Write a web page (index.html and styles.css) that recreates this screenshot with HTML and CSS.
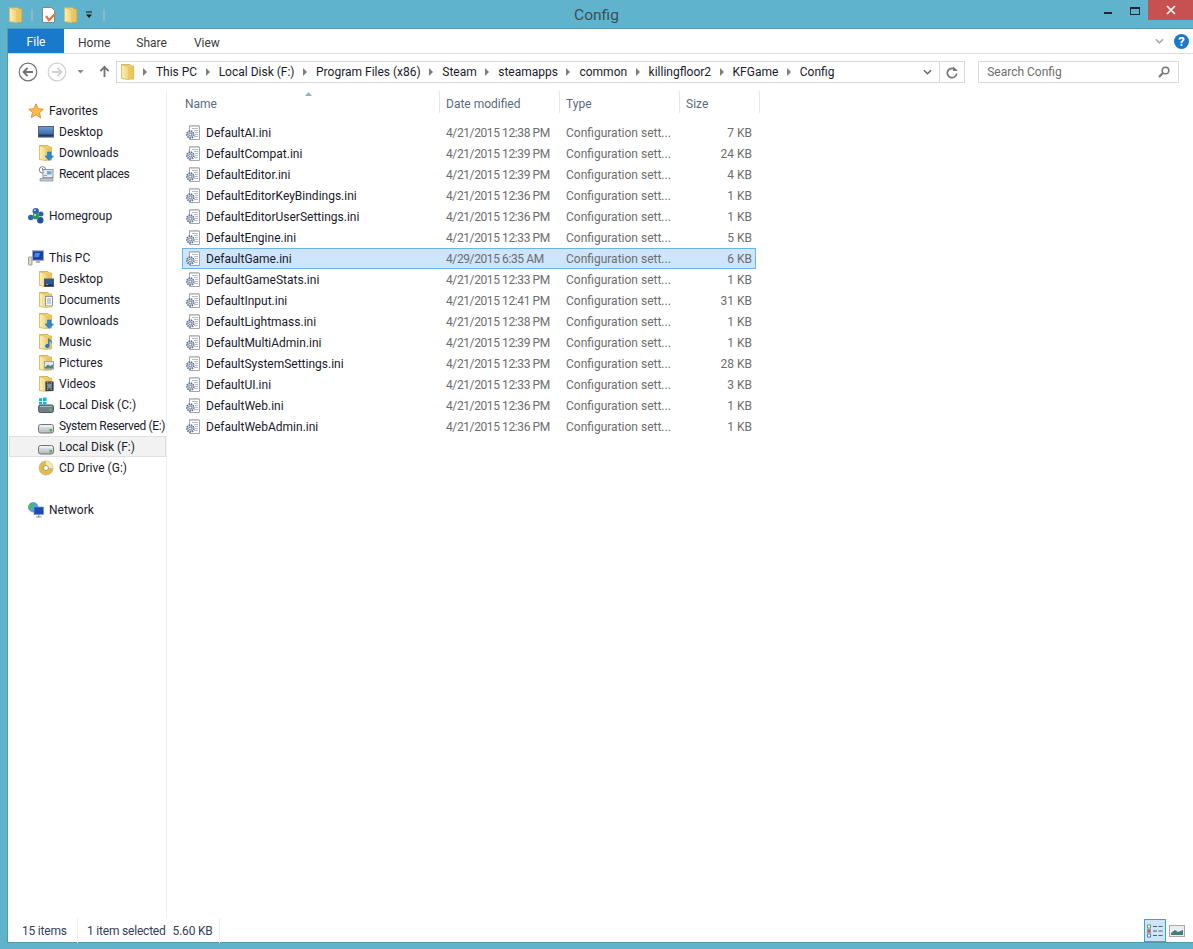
FILE: index.html
```html
<!DOCTYPE html>
<html lang="en">
<head>
    <meta charset="UTF-8">
    <title>Config</title>
    <link rel="stylesheet" href="styles.css">
</head>
<body>
    <!-- icon set -->
    <svg class="defs" width="0" height="0">
        <defs>
            <linearGradient id="folderFill" x1="0" y1="0" x2="1" y2="0">
                <stop offset="0" stop-color="#fbf0b4"/>
                <stop offset="1" stop-color="#efd27a"/>
            </linearGradient>
            <linearGradient id="driveFill" x1="0" y1="0" x2="0" y2="1">
                <stop offset="0" stop-color="#eceef0"/>
                <stop offset="1" stop-color="#b4b9bd"/>
            </linearGradient>
            <linearGradient id="screenFill" x1="0" y1="0" x2="0" y2="1">
                <stop offset="0" stop-color="#6f9fd8"/>
                <stop offset="1" stop-color="#2c5a9e"/>
            </linearGradient>
            <symbol id="folder" viewBox="0 0 16 16">
                <path d="M1.500 .5h8.500l.6 1.500h3v13H9L1.500 14.500z" fill="#f3d272" stroke="#c9a94f" stroke-width=".8"/>
                <path d="M1.500 .8 9 3v12.700L1.500 14.400z" fill="url(#folderFill)" stroke="#d6b862" stroke-width=".7"/>
                <path d="M9.800 3h3.400v11.600H9.800z" fill="#f2c64e"/>
            </symbol>
            <symbol id="gearfile" viewBox="0 0 16 16">
                <path d="M4.500 1h10v13.500h-10z" fill="#fff" stroke="#a3a6ab"/>
                <path d="M4.500 .7h10" stroke="#8f949a" stroke-dasharray="1 1"/>
                <path d="M7 3.500h6M9 5.500h4M10 7.500h3M10 9.500h3M9 11.500h4" stroke="#b4b9c2"/>
                <circle cx="5.300" cy="9.500" r="3.400" fill="#dfe6f0" stroke="#5f7190" stroke-width="1.800" stroke-dasharray="1.500 .8"/>
                <circle cx="5.300" cy="9.500" r="1.500" fill="#f4f7fb" stroke="#4f5f7a" stroke-width=".8"/>
            </symbol>
            <symbol id="star" viewBox="0 0 16 16">
                <path d="M8 .8l2.200 4.900 5.200.5-3.900 3.500 1.200 5.300L8 11.800l-4.700 2.700 1.200-5.300L.6 6.200l5.200-.5z" fill="#fbbb4a" stroke="#e78b2b" stroke-width=".9"/>
            </symbol>
            <symbol id="monitor" viewBox="0 0 16 16">
                <rect x=".5" y="2.500" width="15" height="10.500" fill="url(#screenFill)" stroke="#55606f"/>
                <path d="M1 10.500h14v2H1z" fill="#1d3a6a"/>
                <path d="M1 13.500h14" stroke="#9aa3ae"/>
            </symbol>
            <symbol id="arrowdown" viewBox="0 0 16 16">
                <path d="M9.500 7h3.500v4h2.500l-4.300 4.500L7 11h2.500z" fill="#2a8ad8" stroke="#1b6cb4" stroke-width=".6"/>
            </symbol>
            <symbol id="recent" viewBox="0 0 16 16">
                <circle cx="4.500" cy="3.800" r="3.200" fill="#fff" stroke="#7a8088"/>
                <path d="M4.500 2v2h1.500" fill="none" stroke="#5a6068" stroke-width=".8"/>
                <rect x="5" y="3.500" width="10" height="8" fill="#e6eaef" stroke="#8a9098"/>
                <rect x="9" y="5" width="4.500" height="3.500" fill="#6fa9dc"/>
                <path d="M6 9.500h3M6 11.500h8" stroke="#9aa1aa"/>
                <path d="M2 12.500h13v2.500H2z" fill="#c3c7cc" stroke="#83888f" stroke-width=".7"/>
            </symbol>
            <symbol id="homegroup" viewBox="0 0 16 16">
                <circle cx="2.800" cy="9.500" r="2.800" fill="#2f62b8"/>
                <circle cx="7.800" cy="3.300" r="3.200" fill="#2f62b8"/>
                <circle cx="13" cy="6" r="2.500" fill="#2f5fb0"/>
                <circle cx="12.300" cy="12.300" r="3.200" fill="#24509f"/>
                <circle cx="8" cy="8.200" r="3.300" fill="#2f9b50"/>
                <circle cx="7" cy="7" r="1.100" fill="#bfe8bb"/>
                <circle cx="7" cy="2.200" r=".9" fill="#c5dbf5"/>
            </symbol>
            <symbol id="pc" viewBox="0 0 16 16">
                <rect x=".5" y="7" width="3.500" height="8" rx=".5" fill="#d7dbc8" stroke="#8a8f86" stroke-width=".8"/>
                <rect x="4.500" y=".8" width="11" height="9.500" fill="#1d3fae" stroke="#a0a6b0"/>
                <path d="M7 3h5l-1 4H6z" fill="#3f8be8"/>
                <path d="M8.500 10.500h3l.8 2.500H7.700z" fill="#aab0b8"/>
            </symbol>
            <symbol id="lib-desktop" viewBox="0 0 10 10">
                <rect x=".5" y="2" width="9" height="7.500" fill="#2a5a9c" stroke="#4e5a6a"/>
                <path d="M1 7.500h8V9H1z" fill="#1c2d4a"/>
                <path d="M2 7.500h2" stroke="#e8903a"/>
            </symbol>
            <symbol id="lib-doc" viewBox="0 0 10 10">
                <rect x="1.500" y=".5" width="7" height="9.500" fill="#f4f6f9" stroke="#8f96a0"/>
                <path d="M3 3h4M3 5h4M3 7h4" stroke="#8fa7c4"/>
            </symbol>
            <symbol id="lib-music" viewBox="0 0 10 10">
                <path d="M4.500 0v7.200a2.200 2 0 1 1-1.400-1.600V0z" fill="#1e78cc"/>
                <path d="M4.500 0c1 2 3 2 2.500 5-.5-1.500-1.500-2-2.500-2z" fill="#1e78cc"/>
            </symbol>
            <symbol id="lib-pic" viewBox="0 0 10 10">
                <rect x=".5" y="1.500" width="9" height="7.500" fill="#dfe9ee" stroke="#9aa2a8"/>
                <path d="M1 7l3-2.500 2 1.500 3-1.500V8.500H1z" fill="#4f8a80"/>
            </symbol>
            <symbol id="lib-video" viewBox="0 0 10 10">
                <rect x="1" y=".5" width="8" height="9.500" fill="#48505a" stroke="#2c323a"/>
                <path d="M3 .5v9.500M7 .5v9.500" stroke="#c5cbd2" stroke-dasharray="1 1"/>
                <rect x="3.500" y="2.500" width="3" height="5" fill="#7d97b2"/>
            </symbol>
            <symbol id="drive" viewBox="0 0 16 16">
                <rect x=".5" y="6.500" width="15" height="8.500" rx="2.200" fill="url(#driveFill)" stroke="#6f757a"/>
                <path d="M2 8h12" stroke="#f8f9fa"/>
                <rect x="11.500" y="11" width="2.500" height="2.400" fill="#4fae48"/>
            </symbol>
            <symbol id="sysdrive" viewBox="0 0 16 16">
                <rect x=".5" y="8" width="15" height="7.500" rx="1.800" fill="#6d808c" stroke="#4e5a62"/>
                <path d="M2 9.500h12" stroke="#aab6bd"/>
                <rect x="11.500" y="11.500" width="2.500" height="2.400" fill="#5fbb48"/>
                <path d="M1 1.500l3-.5v3H1zM5 .8l3.500-.6V4H5zM1 4.800h3v2.700H1zM5 4.800h3.500v2.700H5z" fill="#12b0e8"/>
            </symbol>
            <symbol id="cd" viewBox="0 0 16 16">
                <circle cx="8" cy="8" r="7" fill="#e6bd3a" stroke="#b4b4a8" stroke-width=".8"/>
                <path d="M8 1a7 7 0 0 1 7 7H8z" fill="#f5e9b5"/>
                <circle cx="8" cy="8" r="2.600" fill="#e9ecef" stroke="#8f9398" stroke-width=".7"/>
                <circle cx="8" cy="8" r=".9" fill="#fff"/>
            </symbol>
            <symbol id="network" viewBox="0 0 16 16">
                <circle cx="5.200" cy="5.200" r="4.800" fill="#4aa6e0" stroke="#2f7fb8" stroke-width=".5"/>
                <path d="M2 2.500c2-1 3.500 0 3.500 1.500S3 5.500 2.800 7.500C1 6.500.3 4 2 2.500z" fill="#4fbb4f"/>
                <rect x="6" y="5" width="9.500" height="7.500" fill="#1d4cb5" stroke="#7a93bb" stroke-width=".7"/>
                <path d="M10.700 12.500v2M8 15h5.500" stroke="#7f8fa5" stroke-width="1.200"/>
            </symbol>
        </defs>
    </svg>

    <header class="titlebar">
        <div class="quick">
            <svg class="ico"><use href="#folder"/></svg>
            <span class="quick-sep"></span>
            <svg class="ico" viewBox="0 0 16 16">
                <path d="M1.500 .5h9l3 3v12h-12z" fill="#fff" stroke="#7f858c"/>
                <path d="M5 9l3 4 6-6" fill="none" stroke="#e8703a" stroke-width="2.200"/>
            </svg>
            <svg class="ico"><use href="#folder"/></svg>
            <svg class="quick-more" viewBox="0 0 8 8">
                <path d="M1 1h6" stroke="#111" stroke-width="1"/>
                <path d="M1 3.500h6L4 7z" fill="#111"/>
            </svg>
            <span class="quick-sep"></span>
        </div>
        <div class="title">Config</div>
        <div class="winctl">
            <span class="btn-min"></span>
            <span class="btn-max"></span>
            <span class="btn-close">
                <svg width="10" height="10" viewBox="0 0 10 10"><path d="M1 1l8 8M9 1l-8 8" stroke="#fff" stroke-width="1.700"/></svg>
            </span>
        </div>
    </header>

    <main class="window">
        <div class="ribbon">
            <div class="tab tab-file">File</div>
            <div class="tab tab-home">Home</div>
            <div class="tab tab-share">Share</div>
            <div class="tab tab-view">View</div>
            <div class="ribbon-right">
                <svg class="chev" viewBox="0 0 10 6"><path d="M1 1l4 4 4-4" fill="none" stroke="#a6a6a6" stroke-width="1.700"/></svg>
                <span class="help">?</span>
            </div>
        </div>

        <div class="navbar">
            <div class="navbtns">
                <svg class="round" viewBox="0 0 20 20">
                    <circle cx="10" cy="10" r="8.800" fill="#fff" stroke="#737373" stroke-width="1.200"/>
                    <path d="M15 10H6M9.500 6L5.500 10l4 4" fill="none" stroke="#737373" stroke-width="1.800"/>
                </svg>
                <svg class="round" viewBox="0 0 20 20">
                    <circle cx="10" cy="10" r="8.800" fill="#fff" stroke="#d0d0d0" stroke-width="1.200"/>
                    <path d="M5 10h9M10.500 6l4 4-4 4" fill="none" stroke="#d0d0d0" stroke-width="1.800"/>
                </svg>
                <svg class="recent-drop" viewBox="0 0 8 5"><path d="M0 0h8L4 4.500z" fill="#8a8a8a"/></svg>
                <svg class="uparrow" viewBox="0 0 12 14"><path d="M6 13V2M1.500 6.500L6 2l4.500 4.500" fill="none" stroke="#737373" stroke-width="2"/></svg>
            </div>
            <div class="address">
                <svg class="ico"><use href="#folder"/></svg>
                <span class="crumb">This PC</span>
                <span class="crumb">Local Disk (F:)</span>
                <span class="crumb">Program Files (x86)</span>
                <span class="crumb">Steam</span>
                <span class="crumb">steamapps</span>
                <span class="crumb">common</span>
                <span class="crumb">killingfloor2</span>
                <span class="crumb">KFGame</span>
                <span class="crumb">Config</span>
                <svg class="addr-drop" viewBox="0 0 10 6"><path d="M1 1l4 4 4-4" fill="none" stroke="#666" stroke-width="1.600"/></svg>
                <span class="addr-refresh">
                    <svg width="12" height="13" viewBox="0 0 12 13"><path d="M9.800 4.200A4.700 4.700 0 1 0 10.700 7.500" fill="none" stroke="#777" stroke-width="1.700"/><path d="M7 .2v4.800h4.800z" fill="#777"/></svg>
                </span>
            </div>
            <div class="search">
                <span>Search Config</span>
                <svg width="12" height="12" viewBox="0 0 12 12"><circle cx="7.500" cy="4.500" r="3.300" fill="none" stroke="#777" stroke-width="1.500"/><path d="M5 7L1 11" stroke="#777" stroke-width="2.200"/></svg>
            </div>
        </div>

        <div class="body">
            <nav class="tree">
                <div class="tree-group">
                    <div class="tree-row top"><svg class="ico"><use href="#star"/></svg>Favorites</div>
                    <div class="tree-row"><svg class="ico"><use href="#monitor"/></svg>Desktop</div>
                    <div class="tree-row"><svg class="ico"><use href="#folder"/><use href="#arrowdown"/></svg>Downloads</div>
                    <div class="tree-row tight"><svg class="ico"><use href="#recent"/></svg>Recent places</div>
                </div>
                <div class="tree-group">
                    <div class="tree-row top"><svg class="ico"><use href="#homegroup"/></svg>Homegroup</div>
                </div>
                <div class="tree-group">
                    <div class="tree-row top"><svg class="ico"><use href="#pc"/></svg>This PC</div>
                    <div class="tree-row"><svg class="ico"><use href="#folder"/><use href="#lib-desktop" x="6" y="6" width="10" height="10"/></svg>Desktop</div>
                    <div class="tree-row"><svg class="ico"><use href="#folder"/><use href="#lib-doc" x="6" y="4" width="10" height="10"/></svg>Documents</div>
                    <div class="tree-row"><svg class="ico"><use href="#folder"/><use href="#arrowdown"/></svg>Downloads</div>
                    <div class="tree-row"><svg class="ico"><use href="#folder"/><use href="#lib-music" x="7" y="4" width="10" height="11"/></svg>Music</div>
                    <div class="tree-row"><svg class="ico"><use href="#folder"/><use href="#lib-pic" x="6" y="5" width="10" height="10"/></svg>Pictures</div>
                    <div class="tree-row"><svg class="ico"><use href="#folder"/><use href="#lib-video" x="7" y="5" width="9" height="10"/></svg>Videos</div>
                    <div class="tree-row"><svg class="ico"><use href="#sysdrive"/></svg>Local Disk (C:)</div>
                    <div class="tree-row tight"><svg class="ico"><use href="#drive"/></svg>System Reserved (E:)</div>
                    <div class="tree-row current"><svg class="ico"><use href="#drive"/></svg>Local Disk (F:)</div>
                    <div class="tree-row"><svg class="ico"><use href="#cd"/></svg>CD Drive (G:)</div>
                </div>
                <div class="tree-group">
                    <div class="tree-row top"><svg class="ico"><use href="#network"/></svg>Network</div>
                </div>
            </nav>

            <section class="files">
                <div class="cols">
                    <div class="col col-name">Name<svg class="sort" viewBox="0 0 7 4"><path d="M0 4L3.500 0 7 4z" fill="#8fb4c8"/></svg></div>
                    <div class="col col-date">Date modified</div>
                    <div class="col col-type">Type</div>
                    <div class="col col-size">Size</div>
                </div>
                <div class="rows">
                    <div class="row"><span class="c-name"><svg class="ico"><use href="#gearfile"/></svg>DefaultAI.ini</span><span class="c-date">4/21/2015 12:38 PM</span><span class="c-type">Configuration sett...</span><span class="c-size">7 KB</span></div>
                    <div class="row"><span class="c-name"><svg class="ico"><use href="#gearfile"/></svg>DefaultCompat.ini</span><span class="c-date">4/21/2015 12:39 PM</span><span class="c-type">Configuration sett...</span><span class="c-size">24 KB</span></div>
                    <div class="row"><span class="c-name"><svg class="ico"><use href="#gearfile"/></svg>DefaultEditor.ini</span><span class="c-date">4/21/2015 12:39 PM</span><span class="c-type">Configuration sett...</span><span class="c-size">4 KB</span></div>
                    <div class="row"><span class="c-name"><svg class="ico"><use href="#gearfile"/></svg>DefaultEditorKeyBindings.ini</span><span class="c-date">4/21/2015 12:36 PM</span><span class="c-type">Configuration sett...</span><span class="c-size">1 KB</span></div>
                    <div class="row"><span class="c-name"><svg class="ico"><use href="#gearfile"/></svg>DefaultEditorUserSettings.ini</span><span class="c-date">4/21/2015 12:36 PM</span><span class="c-type">Configuration sett...</span><span class="c-size">1 KB</span></div>
                    <div class="row"><span class="c-name"><svg class="ico"><use href="#gearfile"/></svg>DefaultEngine.ini</span><span class="c-date">4/21/2015 12:33 PM</span><span class="c-type">Configuration sett...</span><span class="c-size">5 KB</span></div>
                    <div class="row selected"><span class="c-name"><svg class="ico"><use href="#gearfile"/></svg>DefaultGame.ini</span><span class="c-date">4/29/2015 6:35 AM</span><span class="c-type">Configuration sett...</span><span class="c-size">6 KB</span></div>
                    <div class="row"><span class="c-name"><svg class="ico"><use href="#gearfile"/></svg>DefaultGameStats.ini</span><span class="c-date">4/21/2015 12:33 PM</span><span class="c-type">Configuration sett...</span><span class="c-size">1 KB</span></div>
                    <div class="row"><span class="c-name"><svg class="ico"><use href="#gearfile"/></svg>DefaultInput.ini</span><span class="c-date">4/21/2015 12:41 PM</span><span class="c-type">Configuration sett...</span><span class="c-size">31 KB</span></div>
                    <div class="row"><span class="c-name"><svg class="ico"><use href="#gearfile"/></svg>DefaultLightmass.ini</span><span class="c-date">4/21/2015 12:38 PM</span><span class="c-type">Configuration sett...</span><span class="c-size">1 KB</span></div>
                    <div class="row"><span class="c-name"><svg class="ico"><use href="#gearfile"/></svg>DefaultMultiAdmin.ini</span><span class="c-date">4/21/2015 12:39 PM</span><span class="c-type">Configuration sett...</span><span class="c-size">1 KB</span></div>
                    <div class="row"><span class="c-name"><svg class="ico"><use href="#gearfile"/></svg>DefaultSystemSettings.ini</span><span class="c-date">4/21/2015 12:33 PM</span><span class="c-type">Configuration sett...</span><span class="c-size">28 KB</span></div>
                    <div class="row"><span class="c-name"><svg class="ico"><use href="#gearfile"/></svg>DefaultUI.ini</span><span class="c-date">4/21/2015 12:33 PM</span><span class="c-type">Configuration sett...</span><span class="c-size">3 KB</span></div>
                    <div class="row"><span class="c-name"><svg class="ico"><use href="#gearfile"/></svg>DefaultWeb.ini</span><span class="c-date">4/21/2015 12:36 PM</span><span class="c-type">Configuration sett...</span><span class="c-size">1 KB</span></div>
                    <div class="row"><span class="c-name"><svg class="ico"><use href="#gearfile"/></svg>DefaultWebAdmin.ini</span><span class="c-date">4/21/2015 12:36 PM</span><span class="c-type">Configuration sett...</span><span class="c-size">1 KB</span></div>
                </div>
            </section>
        </div>

        <footer class="status">
            <span class="st-count">15 items</span>
            <span class="st-sel">1 item selected</span>
            <span class="st-size">5.60 KB</span>
            <div class="views">
                <span class="view-btn on">
                    <svg width="18" height="14" viewBox="0 0 18 14">
                        <rect x="1.500" y="1" width="3" height="3" fill="#fff" stroke="#6f9a5a"/>
                        <rect x="1.500" y="5.500" width="3" height="3" fill="#d9534f" stroke="#999"/>
                        <rect x="1.500" y="10" width="3" height="3" fill="#fff" stroke="#5a7ab0"/>
                        <path d="M7 2.500h4M12.500 2.500h4M7 7h4M12.500 7h4M7 11.500h4M12.500 11.500h4" stroke="#55606e"/>
                    </svg>
                </span>
                <span class="view-btn">
                    <svg width="16" height="14" viewBox="0 0 16 14">
                        <rect x=".5" y="1.500" width="15" height="11" fill="#e8eef2" stroke="#a4a8ac"/>
                        <path d="M2 9l4-3 3 2 5-2v5H2z" fill="#3f7f76"/>
                    </svg>
                </span>
            </div>
        </footer>
    </main>
</body>
</html>
```

FILE: styles.css
```css
* {
    box-sizing: border-box;
}
html, body {
    height: 100%;
}
body {
    margin: 0;
    background-color: #5fb3cd;
    font-family: Roboto, "Noto Sans", sans-serif;
    font-size: 12px;
    color: #1a1a2a;
    display: flex;
    flex-direction: column;
    padding-bottom: 6px;
    overflow: hidden;
}
.defs {
    display: block;
    height: 0;
}
.ico {
    width: 16px;
    height: 16px;
    flex: none;
}

/* title bar */
.titlebar {
    height: 28px;
    flex: none;
    display: grid;
    grid-template-columns: 1fr auto 1fr;
    align-items: start;
}
.quick {
    display: flex;
    align-items: center;
    height: 29px;
    padding-left: 8px;
}
.quick-sep {
    width: 2px;
    height: 12px;
    margin: 0 8px 0 7px;
    background-color: #8fb9c6;
}
.quick .ico + .ico {
    margin-left: 6px;
}
.quick-more {
    width: 8px;
    height: 8px;
    margin: 0 3px 0 6px;
}
.title {
    font-size: 15.5px;
    line-height: 30px;
    color: #3c4f58;
}
.winctl {
    display: flex;
    align-items: flex-start;
    justify-self: end;
}
.btn-min {
    width: 8px;
    height: 2px;
    margin: 12px 18px 0 0;
    background-color: #1c2a30;
}
.btn-max {
    width: 10px;
    height: 8px;
    margin: 7px 8px 0 0;
    border: 1px solid #1c2a30;
    border-top-width: 2px;
}
.btn-close {
    width: 45px;
    height: 20px;
    background-color: #c75050;
    display: flex;
    align-items: center;
    justify-content: center;
}

/* window */
.window {
    flex: 1;
    min-height: 0;
    margin-left: 7px;
    background-color: #fff;
    border: 1px solid #4f9ab2;
    border-right: none;
    display: flex;
    flex-direction: column;
}
.ribbon {
    height: 25px;
    flex: none;
    display: flex;
    border-bottom: 1px solid #dadbdc;
}
.tab {
    line-height: 29px;
    color: #3b3b3b;
}
.tab-file {
    width: 56px;
    height: 24px;
    background-color: #1979ca;
    color: #fff;
    text-align: center;
    line-height: 26px;
}
.tab-home {
    margin-left: 14px;
}
.tab-share {
    margin-left: 26px;
}
.tab-view {
    margin-left: 27px;
}
.ribbon-right {
    margin-left: auto;
    display: flex;
    align-items: center;
    padding-right: 4px;
}
.chev {
    width: 9px;
    height: 6px;
    margin-right: 10px;
}
.help {
    width: 15px;
    height: 15px;
    border-radius: 50%;
    background-color: #1979ca;
    color: #fff;
    font-weight: bold;
    font-size: 13px;
    line-height: 15px;
    text-align: center;
}

/* address row */
.navbar {
    height: 37px;
    flex: none;
    display: flex;
    align-items: flex-start;
    padding: 7px 14px 0 10px;
}
.navbtns {
    width: 98px;
    height: 21px;
    display: flex;
    align-items: center;
}
.round {
    width: 20px;
    height: 20px;
    margin-right: 9px;
}
.recent-drop {
    width: 7px;
    height: 4px;
    margin-left: 1px;
}
.uparrow {
    width: 11px;
    height: 13px;
    margin-left: 15px;
}
.address {
    width: 850px;
    height: 22px;
    border: 1px solid #d9d9d9;
    display: flex;
    align-items: center;
    padding-left: 3px;
}
.crumb {
    margin-left: 21.5px;
    position: relative;
    white-space: nowrap;
}
.crumb::before {
    content: "";
    position: absolute;
    left: -13px;
    top: 3px;
    border-left: 4px solid #7d7d7d;
    border-top: 4px solid transparent;
    border-bottom: 4px solid transparent;
}
.address .ico + .crumb {
    margin-left: 20px;
}
.addr-drop {
    width: 9px;
    height: 6px;
    margin-left: auto;
}
.addr-refresh {
    width: 25px;
    height: 20px;
    margin-left: 7px;
    border-left: 1px solid #d9d9d9;
    display: flex;
    align-items: center;
    justify-content: center;
}
.search {
    width: 201px;
    height: 22px;
    margin-left: 13px;
    border: 1px solid #d9d9d9;
    display: flex;
    align-items: center;
    justify-content: space-between;
    padding: 0 8px;
    color: #6d6d6d;
}

/* main panes */
.body {
    flex: 1;
    min-height: 0;
    display: flex;
}
.tree {
    width: 159px;
    flex: none;
    border-right: 1px solid #f0f0f0;
    padding: 9px 0 0 1px;
}
.tree-group + .tree-group {
    margin-top: 21px;
}
.tree-row {
    height: 21px;
    display: flex;
    align-items: center;
    gap: 5px;
    padding-left: 29px;
    white-space: nowrap;
}
.tree-row.top {
    padding-left: 19px;
}
.tree-row.tight {
    letter-spacing: -.35px;
}
.tree-row.current {
    background-color: #f2f2f2;
    border: 1px solid #e0e0e0;
    width: 157px;
    padding-left: 28px;
}

.files {
    flex: 1;
    min-width: 0;
    padding-left: 15px;
}
.cols {
    display: flex;
    height: 31px;
}
.col {
    padding-left: 6px;
    line-height: 25px;
    padding-top: 1px;
    border-right: 1px solid #e5e5e5;
    height: 22px;
    position: relative;
    color: #5a6a80;
}
.col-name {
    width: 258px;
    padding-left: 3px;
}
.col-date {
    width: 120px;
}
.col-type {
    width: 120px;
}
.col-size {
    width: 80px;
}
.sort {
    position: absolute;
    left: 123px;
    top: 1px;
    width: 7px;
    height: 4px;
}
.row {
    display: flex;
    align-items: center;
    height: 21px;
    width: 574px;
    border: 1px solid transparent;
    color: #6d6d6d;
    white-space: nowrap;
}
.row.selected {
    background-color: #cde6fc;
    border-color: #6cb4e8;
}
.c-name {
    width: 263px;
    display: flex;
    align-items: center;
    gap: 5px;
    padding-left: 2px;
    color: #1a1a2a;
}
.c-date {
    width: 120px;
    letter-spacing: -.4px;
}
.c-type {
    width: 120px;
}
.c-size {
    width: 66px;
    text-align: right;
}

/* status bar */
.status {
    height: 24px;
    flex: none;
    display: flex;
    align-items: center;
    padding-left: 14px;
    color: #33405a;
    letter-spacing: -.2px;
}
.st-count {
    width: 56px;
    border-right: 1px solid #efefef;
    margin-right: 9px;
    line-height: 24px;
    padding-top: 1px;
}
.st-sel {
    margin-right: 7px;
    padding-top: 1px;
}
.st-size {
    width: 47px;
    border-right: 1px solid #efefef;
    line-height: 24px;
    padding-top: 1px;
}
.views {
    margin-left: auto;
    display: flex;
    align-self: flex-end;
    padding-right: 5px;
}
.view-btn {
    width: 22px;
    height: 23px;
    display: flex;
    align-items: center;
    justify-content: center;
}
.view-btn.on {
    background-color: #cde6f7;
    border: 1px solid #3ca3d8;
}
```
